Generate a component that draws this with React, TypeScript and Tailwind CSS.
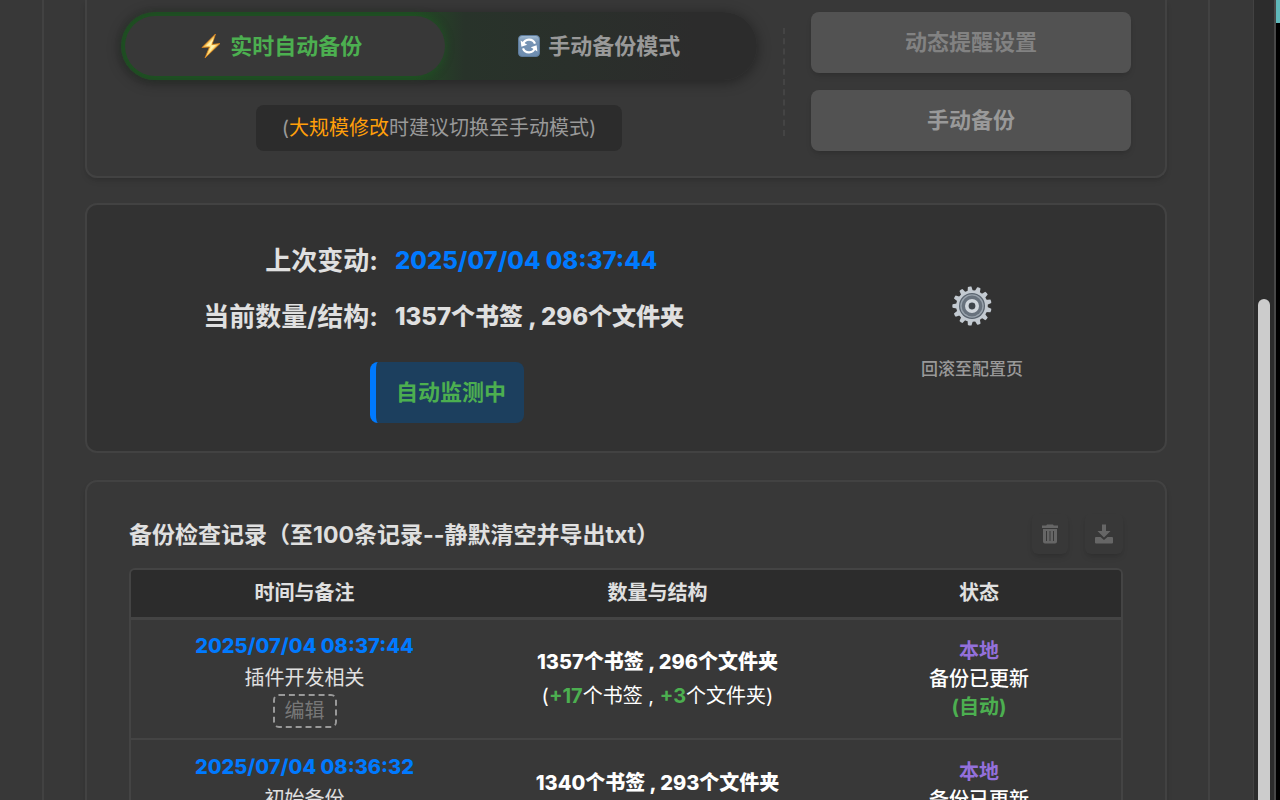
import { useState } from "react";

type BackupRecord = {
  time: string;
  note: string;
  bookmarks: number;
  folders: number;
  diff?: { bookmarks: string; folders: string };
};

const records: BackupRecord[] = [
  {
    time: "2025/07/04 08:37:44",
    note: "插件开发相关",
    bookmarks: 1357,
    folders: 296,
    diff: { bookmarks: "+17", folders: "+3" }
  },
  {
    time: "2025/07/04 08:36:32",
    note: "初始备份",
    bookmarks: 1340,
    folders: 293
  }
];

const gearTeeth = Array.from({ length: 13 }, (_, i) => (i * 360) / 13);

function BoltIcon() {
  return (
    <svg viewBox="0 0 22 26" className="h-[26px] w-[22px]" aria-hidden="true">
      <defs>
        <linearGradient id="bolt" x1="0" y1="0" x2="1" y2="1">
          <stop offset="0" stopColor="#f08a1c" />
          <stop offset="0.5" stopColor="#ffe27a" />
          <stop offset="1" stopColor="#f08a1c" />
        </linearGradient>
      </defs>
      <path d="M15.5 1 L2 14.5 L9.5 14 L5 25 L20 10.5 L12 11.5 Z" fill="url(#bolt)" stroke="#d9821b" strokeWidth="0.8" strokeLinejoin="round" />
      <path d="M14 5 L6 13 L11.5 12.6 L9 19 L16 12 L10.5 12.6 Z" fill="#fff3b0" />
    </svg>
  );
}

function SyncIcon() {
  return (
    <svg viewBox="0 0 22 22" className="h-[22px] w-[22px]" aria-hidden="true">
      <defs>
        <linearGradient id="sync" x1="0" y1="0" x2="0" y2="1">
          <stop offset="0" stopColor="#a3bdd4" />
          <stop offset="0.3" stopColor="#7794b4" />
          <stop offset="1" stopColor="#6d8db0" />
        </linearGradient>
      </defs>
      <rect x="0.5" y="0.5" width="21" height="21" rx="3.5" fill="url(#sync)" stroke="#5d7b9b" />
      <path d="M5 9 A6.4 6.4 0 0 1 17 8.6" fill="none" stroke="#fff" strokeWidth="2.3" />
      <path d="M17 13 A6.4 6.4 0 0 1 5 13.4" fill="none" stroke="#fff" strokeWidth="2.3" />
      <path d="M2.6 5.6 L3.4 11.8 L9.2 9.8 Z" fill="#fff" />
      <path d="M19.4 16.4 L18.6 10.2 L12.8 12.2 Z" fill="#fff" />
    </svg>
  );
}

function GearIcon() {
  return (
    <svg viewBox="0 0 40 40" className="h-10 w-10" aria-hidden="true">
      {gearTeeth.map((angle) => (
        <path key={angle} d="M17.2 6 L18.2 0.6 Q20 0 21.8 0.6 L22.8 6 Z" fill="#c3cad1" transform={`rotate(${angle - 7} 20 20)`} />
      ))}
      <circle cx="20" cy="20" r="15.8" fill="#c3cad1" />
      <circle cx="20" cy="20" r="13" fill="#59636e" />
      <circle cx="20" cy="20" r="11.8" fill="#98a2ac" />
      <circle cx="20" cy="20" r="10.4" fill="#68727d" />
      <circle cx="20" cy="20" r="5.2" fill="none" stroke="#d0d6dc" strokeWidth="3.6" />
      <circle cx="20" cy="20" r="3.2" fill="#3f454b" />
    </svg>
  );
}

function TrashIcon() {
  return (
    <svg viewBox="0 0 18 20" className="h-5 w-[18px]" fill="currentColor" aria-hidden="true">
      <path d="M6 0.5 H12 L12.8 1.5 H17 V4 H1 V1.5 H5.2 Z" />
      <path fillRule="evenodd" d="M2 5 H16 V17.5 Q16 19.5 14 19.5 H4 Q2 19.5 2 17.5 Z M5 7 V17 H6 V7 Z M8.5 7 V17 H9.5 V7 Z M12 7 V17 H13 V7 Z" />
    </svg>
  );
}

function DownloadIcon() {
  return (
    <svg viewBox="0 0 18 20" className="h-5 w-[18px]" fill="currentColor" aria-hidden="true">
      <path d="M7 0.5 H11 V7 H15.5 L9 13.5 L2.5 7 H7 Z" />
      <path d="M1 13 H5.5 L9 16 L12.5 13 H17 Q18 13 18 14 V18.5 Q18 19.5 17 19.5 H1 Q0 19.5 0 18.5 V14 Q0 13 1 13 Z" />
    </svg>
  );
}

function ModeCard() {
  const [mode, setMode] = useState<"auto" | "manual">("auto");

  return (
    <section className="flex items-start rounded-b-xl border-2 border-t-0 border-[#424242] px-[34px] pt-3 pb-[25px] shadow-md">
      <div className="flex min-w-0 flex-1 flex-col items-center">
        <div className="flex h-[68px] w-full rounded-full bg-linear-to-r from-[#1f4a22] from-46% via-[#28332a] via-54% to-[#2c2c2c] to-90% p-1 shadow-[0_2px_14px_rgba(0,0,0,0.4)]">
          <button
            type="button"
            onClick={() => setMode("auto")}
            aria-pressed={mode === "auto"}
            className="flex w-[51%] items-center justify-center gap-2 rounded-full bg-[#383838] pr-2 text-[22px] font-bold text-[#4caf50] shadow-[0_0_8px_rgba(30,90,35,0.7)]"
          >
            <BoltIcon />
            实时自动备份
          </button>
          <button
            type="button"
            onClick={() => setMode("manual")}
            aria-pressed={mode === "manual"}
            className="flex flex-1 items-center justify-center gap-2 rounded-full text-[22px] font-bold text-[#999999]"
          >
            <SyncIcon />
            手动备份模式
          </button>
        </div>
        <p className="mt-[25px] flex h-[46px] items-center rounded-lg bg-[#2c2c2c] px-[26px] text-[20px] text-[#999999]">
          (<span className="text-[#ff9f0a]">大规模修改</span>时建议切换至手动模式)
        </p>
      </div>
      <div className="mx-[26px] mt-4 h-[108px] border-l-2 border-dashed border-[#444444]" />
      <div className="flex w-[320px] flex-col gap-[17px]">
        <button type="button" className="h-[61px] rounded-lg bg-[#525252] text-[22px] font-bold text-[#828282] shadow-md">
          动态提醒设置
        </button>
        <button type="button" className="h-[61px] rounded-lg bg-[#525252] text-[22px] font-bold text-[#999999] shadow-md">
          手动备份
        </button>
      </div>
    </section>
  );
}

function StatusCard() {
  return (
    <section className="flex rounded-xl border-2 border-[#424242] bg-[#323232] pb-7">
      <div className="flex-1 pt-9">
        <dl className="grid grid-cols-[291px_1fr] items-center gap-x-[17px] gap-y-4 leading-10 font-bold text-[#e0e0e0]">
          <dt className="text-right text-[26px]">上次变动:</dt>
          <dd className="text-[24px] font-extrabold text-[#007aff]">2025/07/04 08:37:44</dd>
          <dt className="text-right text-[26px]">当前数量/结构:</dt>
          <dd className="text-[24px] font-extrabold">1357个书签 , 296个文件夹</dd>
        </dl>
        <p className="mt-[25px] ml-[283px] flex h-[61px] w-fit items-center rounded-lg border-l-[6px] border-[#007aff] bg-[#1c3f5e] pr-[18px] pl-5 text-[22px] font-bold text-[#4caf50]">
          自动监测中
        </p>
      </div>
      <div className="flex w-[386px] flex-col items-center pt-[81px]">
        <button type="button" className="flex w-fit flex-col items-center gap-[31px] text-[17px] font-medium text-[#999999]">
          <GearIcon />
          回滚至配置页
        </button>
      </div>
    </section>
  );
}

function RecordsCard() {
  return (
    <section className="rounded-xl border-2 border-[#424242] px-[42px] pt-8 shadow-md">
      <div className="flex h-[54px] items-start justify-between">
        <h2 className="text-[23px] leading-[42px] font-bold text-[#e0e0e0]">备份检查记录（至100条记录--静默清空并导出txt）</h2>
        <div className="flex gap-[17px] text-[#666666]">
          <button type="button" aria-label="清空" className="flex h-10 w-9 items-center justify-center rounded-md shadow-md">
            <TrashIcon />
          </button>
          <button type="button" aria-label="导出" className="flex h-10 w-[38px] items-center justify-center rounded-md shadow-md">
            <DownloadIcon />
          </button>
        </div>
      </div>
      <div className="overflow-hidden rounded-t-md border-2 border-b-0 border-[#444444]">
        <table className="w-full table-fixed border-collapse text-center text-[20px]">
          <thead className="bg-[#2c2c2c] text-[#e0e0e0]">
            <tr className="h-12 border-b-3 border-[#444444]">
              <th className="w-[347px]">时间与备注</th>
              <th>数量与结构</th>
              <th className="w-[284px]">状态</th>
            </tr>
          </thead>
          <tbody className="text-white">
            {records.map((record) => (
              <tr key={record.time} className="h-[121px] border-b-2 border-[#444444]">
                <td>
                  <div className="leading-8 font-extrabold text-[#007aff]">{record.time}</div>
                  <div className="leading-8 text-[#e0e0e0]">{record.note}</div>
                  <button type="button" className="h-[34px] rounded-md border-2 border-dashed border-[#999999] px-[10px] leading-7 text-[#777777]">
                    编辑
                  </button>
                </td>
                <td>
                  <div className="leading-[34px] font-extrabold">
                    {record.bookmarks}个书签 , {record.folders}个文件夹
                  </div>
                  <div className="h-[34px] leading-[34px]">
                    {record.diff && (
                      <>
                        (<b className="text-[#4caf50]">{record.diff.bookmarks}</b>个书签 ,{" "}
                        <b className="text-[#4caf50]">{record.diff.folders}</b>个文件夹)
                      </>
                    )}
                  </div>
                </td>
                <td className="leading-7">
                  <div className="font-bold text-[#9370db]">本地</div>
                  <div className="font-medium">备份已更新</div>
                  <div className="font-bold text-[#4caf50]">(自动)</div>
                </td>
              </tr>
            ))}
          </tbody>
        </table>
      </div>
    </section>
  );
}

export default function App() {
  return (
    <div className="flex h-screen overflow-hidden bg-[#383838] font-['Inter','Noto_Sans_CJK_SC',sans-serif]">
      <main className="min-w-0 flex-1 overflow-hidden pr-[43px] pl-[42px]">
        <div className="flex flex-col border-x-2 border-[#424242] px-[41px]">
          <ModeCard />
          <div className="mt-[25px] mb-[27px]">
            <StatusCard />
          </div>
          <RecordsCard />
        </div>
      </main>
      <div className="flex w-[23px] justify-center border-r-2 border-l border-r-[#484848] border-l-[#424242] bg-[#2c2c2c] pt-[299px]">
        <div className="w-3 rounded-t-full bg-[#cccccc]" />
      </div>
      <div className="w-1 bg-black">
        <div className="h-[23px] bg-[#5fb8ba]" />
      </div>
    </div>
  );
}
